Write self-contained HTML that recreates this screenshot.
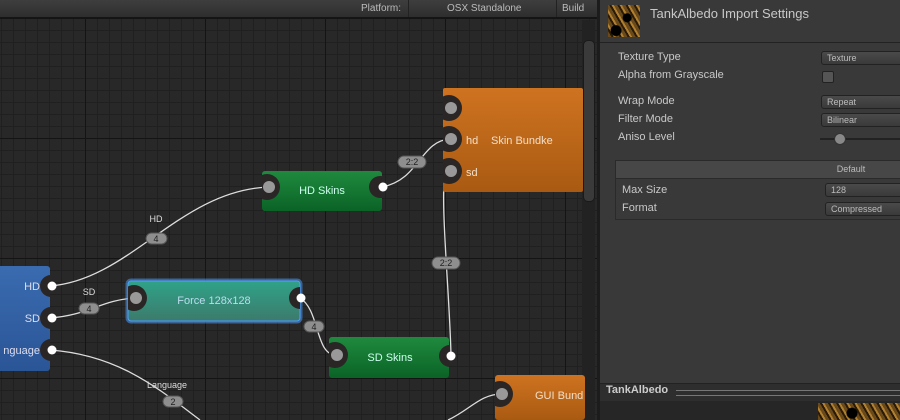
<!DOCTYPE html>
<html><head><style>
body{margin:0;width:900px;height:420px;overflow:hidden;background:#282828;font-family:"Liberation Sans",sans-serif;position:relative}
.canvas{position:absolute;left:0;top:0;width:597px;height:420px;background-color:#282828;
background-image:linear-gradient(#141414 1px,transparent 1px),linear-gradient(90deg,#141414 1px,transparent 1px),linear-gradient(#202020 1px,transparent 1px),linear-gradient(90deg,#202020 1px,transparent 1px);
background-size:120px 120px,120px 120px,12px 12px,12px 12px;background-position:85px 18px,85px 18px,1px 6px,1px 6px}
.tb{position:absolute;left:0;top:0;width:597px;height:17px;background:linear-gradient(#3e3e3e,#2e2e2e);border-bottom:1px solid #151515;font-size:10px;color:#bbb}
.tb span{position:absolute;top:3px}
.panel{position:absolute;left:597px;top:0;width:303px;height:420px;background:#393939;border-left:3px solid #1c1c1c;box-sizing:border-box}
.lbl{position:absolute;left:18px;font-size:11px;color:#c8c8c8}
.dd{position:absolute;left:221px;width:90px;height:12px;border-radius:3px;background:linear-gradient(#4a4a4a,#3a3a3a);border:1px solid #222;font-size:9px;color:#bbb;padding-left:5px;line-height:12px}
</style></head><body>
<div class="canvas"></div>
<div class="tb"><span style="left:361px">Platform:</span><span style="left:447px">OSX Standalone</span><span style="left:562px">Build</span>
<div style="position:absolute;left:408px;top:0;width:1px;height:17px;background:#222"></div>
<div style="position:absolute;left:556px;top:0;width:1px;height:17px;background:#222"></div></div>
<div style="position:absolute;left:582px;top:20px;width:13px;height:400px;background:#222"></div>
<div style="position:absolute;left:583px;top:40px;width:10px;height:160px;border-radius:5px;background:#3a3a3a;border:1px solid #1a1a1a"></div>
<svg width="597" height="420" style="position:absolute;left:0;top:0" font-family="Liberation Sans,sans-serif">
<defs>
<linearGradient id="g" x1="0" y1="0" x2="0" y2="1"><stop offset="0" stop-color="#1f8a3e"/><stop offset="1" stop-color="#0b6326"/></linearGradient>
<linearGradient id="o" x1="0" y1="0" x2="0" y2="1"><stop offset="0" stop-color="#ce7320"/><stop offset="1" stop-color="#a95a12"/></linearGradient>
<linearGradient id="t" x1="0" y1="0" x2="0" y2="1"><stop offset="0" stop-color="#2fa388"/><stop offset="1" stop-color="#3c7a6c"/></linearGradient>
<linearGradient id="b" x1="0" y1="0" x2="0" y2="1"><stop offset="0" stop-color="#3a6bb0"/><stop offset="1" stop-color="#2a5596"/></linearGradient>
<clipPath id="cb"><rect x="-10" y="266" width="60" height="105"/></clipPath>
<clipPath id="ch"><rect x="262" y="171" width="120" height="40"/></clipPath>
<clipPath id="co"><rect x="443" y="88" width="140" height="104"/></clipPath>
<clipPath id="cf"><rect x="128" y="281" width="172" height="40"/></clipPath>
<clipPath id="cs"><rect x="329" y="337" width="120" height="41"/></clipPath>
<clipPath id="cg"><rect x="495" y="375" width="90" height="45"/></clipPath>
</defs>
<g fill="none" stroke="#ddd" stroke-width="1.3">
<path d="M50 286 C130 280 180 190 269 187"/>
<path d="M50 318 C90 315 100 300 135 298"/>
<path d="M50 350 C120 355 160 390 200 420"/>
<path d="M382 187 C420 180 420 140 451 139"/>
<path d="M300 298 C320 310 315 355 336 355"/>
<path d="M451 356 C450 300 440 200 445 175 L451 171"/>
<path d="M448 420 C470 410 480 394 502 394"/>
</g>
<rect x="-10" y="266" width="60" height="105" rx="3" fill="url(#b)"/>
<g font-size="11" fill="#dde" text-anchor="end"><text x="40" y="290">HD</text><text x="40" y="322">SD</text><text x="40" y="354">nguage</text></g>
<rect x="262" y="171" width="120" height="40" rx="3" fill="url(#g)"/>
<text x="322" y="194" font-size="11" fill="#cfe" text-anchor="middle">HD Skins</text>
<rect x="443" y="88" width="140" height="104" rx="2" fill="url(#o)"/>
<text x="466" y="144" font-size="11" fill="#f2dfc8">hd</text><text x="491" y="144" font-size="11" fill="#f2dfc8">Skin Bundke</text>
<text x="466" y="176" font-size="11" fill="#f2dfc8">sd</text>
<rect x="127" y="280" width="174" height="42" rx="4" fill="none" stroke="#4fa0ff" stroke-opacity=".5" stroke-width="3"/>
<rect x="128" y="281" width="172" height="40" rx="3" fill="url(#t)" stroke="#4fa0ff" stroke-width="1"/>
<text x="214" y="304" font-size="11" fill="#bde" text-anchor="middle">Force 128x128</text>
<rect x="329" y="337" width="120" height="41" rx="3" fill="url(#g)"/>
<text x="390" y="361" font-size="11" fill="#cfe" text-anchor="middle">SD Skins</text>
<rect x="495" y="375" width="90" height="45" rx="3" fill="url(#o)"/>
<text x="535" y="399" font-size="11" fill="#f2dfc8">GUI Bund</text>
<g fill="#2a2626">
<g clip-path="url(#co)"><circle cx="449" cy="108" r="13"/><circle cx="449" cy="139" r="13"/><circle cx="449" cy="171" r="13"/></g>
<g clip-path="url(#ch)"><circle cx="267" cy="187" r="13"/><circle cx="380" cy="187" r="11"/></g>
<g clip-path="url(#cf)"><circle cx="134" cy="298" r="13"/><circle cx="300" cy="298" r="11"/></g>
<g clip-path="url(#cs)"><circle cx="335" cy="355" r="13"/><circle cx="450" cy="356" r="11"/></g>
<g clip-path="url(#cg)"><circle cx="500" cy="394" r="13"/></g>
<g clip-path="url(#cb)"><circle cx="51" cy="286" r="11"/><circle cx="51" cy="318" r="11"/><circle cx="51" cy="350" r="11"/></g>
</g>
<g fill="#999"><circle cx="451" cy="108" r="6"/><circle cx="451" cy="139" r="6"/><circle cx="451" cy="171" r="6"/><circle cx="269" cy="187" r="6"/><circle cx="136" cy="298" r="6"/><circle cx="337" cy="355" r="6"/><circle cx="502" cy="394" r="6"/></g>
<g fill="#fff"><circle cx="383" cy="187" r="4.5"/><circle cx="301" cy="298" r="4.5"/><circle cx="451" cy="356" r="4.5"/><circle cx="52" cy="286" r="4.5"/><circle cx="52" cy="318" r="4.5"/><circle cx="52" cy="350" r="4.5"/></g>
<g fill="#8e8e8e" stroke="#555"><rect x="146" y="233" width="21" height="11" rx="5.5"/><rect x="79" y="303" width="20" height="11" rx="5.5"/><rect x="304" y="321" width="20" height="11" rx="5.5"/><rect x="163" y="396" width="20" height="11" rx="5.5"/><rect x="398" y="156" width="28" height="12" rx="6"/><rect x="432" y="257" width="28" height="12" rx="6"/></g>
<g font-size="9" fill="#222" text-anchor="middle"><text x="156" y="242">4</text><text x="89" y="312">4</text><text x="314" y="330">4</text><text x="173" y="405">2</text><text x="412" y="165">2:2</text><text x="446" y="266">2:2</text></g>
<g font-size="9" fill="#ddd" text-anchor="middle"><text x="156" y="222">HD</text><text x="89" y="295">SD</text><text x="167" y="388">Language</text></g>
</svg>
<div class="panel">
<div style="position:absolute;left:8px;top:5px;width:32px;height:32px;background:radial-gradient(circle at 60% 40%,#000 4px,transparent 5px),radial-gradient(circle at 25% 80%,#000 5px,transparent 6px),repeating-linear-gradient(60deg,#6a4a1a 0 3px,#2a1a08 3px 5px,#b08030 5px 7px)"></div>
<div style="position:absolute;left:50px;top:6px;font-size:13px;color:#c8c8c8">TankAlbedo Import Settings</div>
<div style="position:absolute;left:0;top:42px;width:303px;height:1px;background:#222"></div>
<div class="lbl" style="top:51px">Texture Type</div><div class="dd" style="top:51px">Texture</div>
<div class="lbl" style="top:69px">Alpha from Grayscale</div>
<div style="position:absolute;left:222px;top:71px;width:10px;height:10px;border:1px solid #222;background:#555;border-radius:2px"></div>
<div class="lbl" style="top:95px">Wrap Mode</div><div class="dd" style="top:95px">Repeat</div>
<div class="lbl" style="top:113px">Filter Mode</div><div class="dd" style="top:113px">Bilinear</div>
<div class="lbl" style="top:131px">Aniso Level</div>
<div style="position:absolute;left:220px;top:138px;width:90px;height:2px;background:#222"></div>
<div style="position:absolute;left:234px;top:133px;width:10px;height:10px;border-radius:50%;background:#888;border:1px solid #333"></div>
<div style="position:absolute;left:15px;top:160px;width:290px;height:17px;background:#474747;border:1px solid #2a2a2a;font-size:9px;color:#bbb;text-align:center;line-height:17px;text-indent:180px">Default</div>
<div style="position:absolute;left:15px;top:178px;width:290px;height:41px;border:1px solid #2a2a2a;border-top:none"></div>
<div class="lbl" style="top:184px;left:22px">Max Size</div><div class="dd" style="top:183px;left:225px">128</div>
<div class="lbl" style="top:202px;left:22px">Format</div><div class="dd" style="top:202px;left:225px">Compressed</div>
<div style="position:absolute;left:0;top:383px;width:303px;height:17px;background:#2e2e2e;border-top:1px solid #222"></div>
<div style="position:absolute;left:6px;top:384px;font-size:11px;font-weight:bold;color:#ccc">TankAlbedo</div>
<div style="position:absolute;left:76px;top:390px;width:227px;height:4px;border-top:1px solid #777;border-bottom:1px solid #777"></div>
<div style="position:absolute;left:0;top:401px;width:303px;height:19px;background:#262626"></div>
<div style="position:absolute;left:218px;top:403px;width:85px;height:17px;background:radial-gradient(circle at 40% 60%,#000 5px,transparent 6px),repeating-linear-gradient(60deg,#6a4a1a 0 3px,#2a1a08 3px 5px,#b08030 5px 7px)"></div>
</div>
</body></html>
